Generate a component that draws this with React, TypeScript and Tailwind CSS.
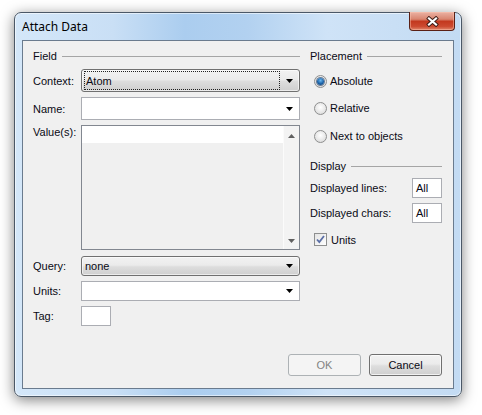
import React from 'react'

const font = "font-['Liberation_Sans',Arial,sans-serif]"

function Arrow({ up, color = '#000' }: { up?: boolean; color?: string }) {
  return (
    <svg width="7" height="4" viewBox="0 0 7 4">
      <path d={up ? 'M0 4h7L3.5 0z' : 'M0 0h7L3.5 4z'} fill={color} />
    </svg>
  )
}

function GroupHeader({ title }: { title: string }) {
  return (
    <div className="h-[14px] flex items-center">
      <span>{title}</span>
      <div className="flex-1 ml-[5px] h-[1px] bg-[#a5a5a5]"></div>
    </div>
  )
}

function Radio({ label, checked }: { label: string; checked?: boolean }) {
  return (
    <div className="h-[20px] flex items-center pl-[4px]">
      <div className="w-[13px] h-[13px] rounded-full border border-[#8e8f8f] bg-[radial-gradient(circle_at_50%_40%,#ffffff,#e6e6e6_60%,#cfcfcf)] flex items-center justify-center">
        {checked && <div className="w-[7px] h-[7px] rounded-full bg-[radial-gradient(circle_at_50%_35%,#6ab8f0,#1c63a8_55%,#0c3a6e)] shadow-[0_0_0_1px_rgba(20,50,90,0.6)]"></div>}
      </div>
      <span className="ml-[3px]">{label}</span>
    </div>
  )
}

export default function App() {
  return (
    <div className={`w-[482px] h-[415px] bg-white pt-[12px] pl-[14px] text-[11px] leading-[14px] text-[#0a0a14] ${font}`}>
      <div className="relative w-[448px] h-[385px] rounded-[7px] border border-[#4b5867] shadow-[0_3px_14px_rgba(0,0,0,0.5),inset_0_0_0_1px_rgba(255,255,255,0.55)] bg-[linear-gradient(90deg,#d4e7f9_0%,#c9dff5_22%,#abcdef_38%,#b2d1f0_52%,#cfe3f7_70%,#c3dbf3_100%)] flex flex-col">
        <div className="h-[27px] flex items-center pl-[7px] text-[12px] font-['Noto_Sans',sans-serif] text-black">
          Attach Data
        </div>
        <div className="absolute top-[-1px] right-[6px] w-[46px] h-[19px] rounded-b-[4px] border border-t-0 border-[#5a2015] bg-[linear-gradient(#ebb2a4,#d98570_40%,#c3391f_52%,#cc4a30_80%,#e0876c)] shadow-[inset_0_0_0_1px_rgba(255,200,180,0.45)] flex items-center justify-center">
          <svg width="13" height="11" viewBox="0 0 13 11">
            <path d="M3 2.5l7 6M10 2.5l-7 6" stroke="#3a1a14" strokeWidth="4" strokeLinecap="square" />
            <path d="M3 2.5l7 6M10 2.5l-7 6" stroke="#ffffff" strokeWidth="2.2" strokeLinecap="square" />
          </svg>
        </div>
        <div className="flex-1 mx-[7px] mb-[7px] border border-[#6a7b8e] bg-[#f0f0f0] flex flex-col pl-[10px] pr-[11px] pt-[8px] pb-[12px]">
          <div className="flex gap-[10px]">
            {/* left column */}
            <div className="w-[267px] flex flex-col">
              <GroupHeader title="Field" />
              <div className="mt-[6px] flex items-center">
                <span className="w-[48px]">Context:</span>
                <div className="w-[219px] h-[23px] rounded-[3px] border border-[#707070] bg-[linear-gradient(#f2f2f2,#ebebeb_45%,#dddddd_55%,#cfcfcf)] shadow-[inset_0_0_0_1px_rgba(255,255,255,0.6)] flex items-center py-[1px] pl-[2px]">
                  <div className="flex-1 h-[19px] border border-dotted border-[#222] flex items-center pl-[1px]">Atom</div>
                  <div className="w-[19px] flex justify-center"><Arrow /></div>
                </div>
              </div>
              <div className="mt-[5px] flex items-center">
                <span className="w-[48px]">Name:</span>
                <div className="w-[219px] h-[23px] border border-[#abadb3] bg-white flex items-center justify-end">
                  <div className="w-[19px] flex justify-center"><Arrow /></div>
                </div>
              </div>
              <div className="mt-[5px] flex items-start">
                <span className="w-[48px]">Value(s):</span>
                <div className="w-[219px] h-[125px] border border-[#828790] bg-[#f0f0f0] flex">
                  <div className="flex-1">
                    <div className="h-[17px] bg-white"></div>
                  </div>
                  <div className="w-[16px] bg-[#f3f3f3] border-l border-[#fbfbfb] flex flex-col items-center justify-between pt-[8px] pb-[6px]">
                    <Arrow up color="#606060" />
                    <Arrow color="#606060" />
                  </div>
                </div>
              </div>
              <div className="mt-[6px] flex items-center">
                <span className="w-[48px]">Query:</span>
                <div className="w-[219px] h-[20px] rounded-[3px] border border-[#707070] bg-[linear-gradient(#f2f2f2,#ebebeb_45%,#dddddd_55%,#cfcfcf)] shadow-[inset_0_0_0_1px_rgba(255,255,255,0.6)] flex items-center pl-[3px]">
                  <span className="flex-1">none</span>
                  <div className="w-[19px] flex justify-center"><Arrow /></div>
                </div>
              </div>
              <div className="mt-[5px] flex items-center">
                <span className="w-[48px]">Units:</span>
                <div className="w-[219px] h-[20px] border border-[#abadb3] bg-white flex items-center justify-end">
                  <div className="w-[19px] flex justify-center"><Arrow /></div>
                </div>
              </div>
              <div className="mt-[5px] flex items-center">
                <span className="w-[48px]">Tag:</span>
                <div className="w-[30px] h-[20px] border border-[#abadb3] bg-white"></div>
              </div>
            </div>
            {/* right column */}
            <div className="w-[133px] flex flex-col">
              <GroupHeader title="Placement" />
              <div className="mt-[8px]"><Radio label="Absolute" checked /></div>
              <div className="mt-[7px]"><Radio label="Relative" /></div>
              <div className="mt-[8px]"><Radio label="Next to objects" /></div>
              <div className="mt-[13px]"><GroupHeader title="Display" /></div>
              <div className="mt-[5px] flex items-center justify-between">
                <span>Displayed lines:</span>
                <div className="w-[30px] h-[20px] border border-[#abadb3] bg-white flex items-center pl-[3px]">All</div>
              </div>
              <div className="mt-[5px] flex items-center justify-between">
                <span>Displayed chars:</span>
                <div className="w-[30px] h-[20px] border border-[#abadb3] bg-white flex items-center pl-[3px]">All</div>
              </div>
              <div className="mt-[10px] h-[13px] flex items-center pl-[4px]">
                <div className="w-[13px] h-[13px] border border-[#8e8f8f] bg-[linear-gradient(135deg,#e4e4e4,#ffffff)] flex items-center justify-center">
                  <svg width="9" height="9" viewBox="0 0 9 9">
                    <path d="M1 4.5l2.3 2.6L8 1" stroke="#5b6fa6" strokeWidth="1.8" fill="none" />
                  </svg>
                </div>
                <span className="ml-[4px]">Units</span>
              </div>
            </div>
          </div>
          <div className="mt-auto flex justify-end gap-[8px]">
            <div className="w-[73px] h-[22px] rounded-[3px] border border-[#adb2b5] bg-[#f4f4f4] flex items-center justify-center text-[#838383]">OK</div>
            <div className="w-[73px] h-[22px] rounded-[3px] border border-[#707070] bg-[linear-gradient(#f2f2f2,#ebebeb_45%,#dddddd_55%,#cfcfcf)] shadow-[inset_0_0_0_1px_rgba(255,255,255,0.7)] flex items-center justify-center">Cancel</div>
          </div>
        </div>
      </div>
    </div>
  )
}
